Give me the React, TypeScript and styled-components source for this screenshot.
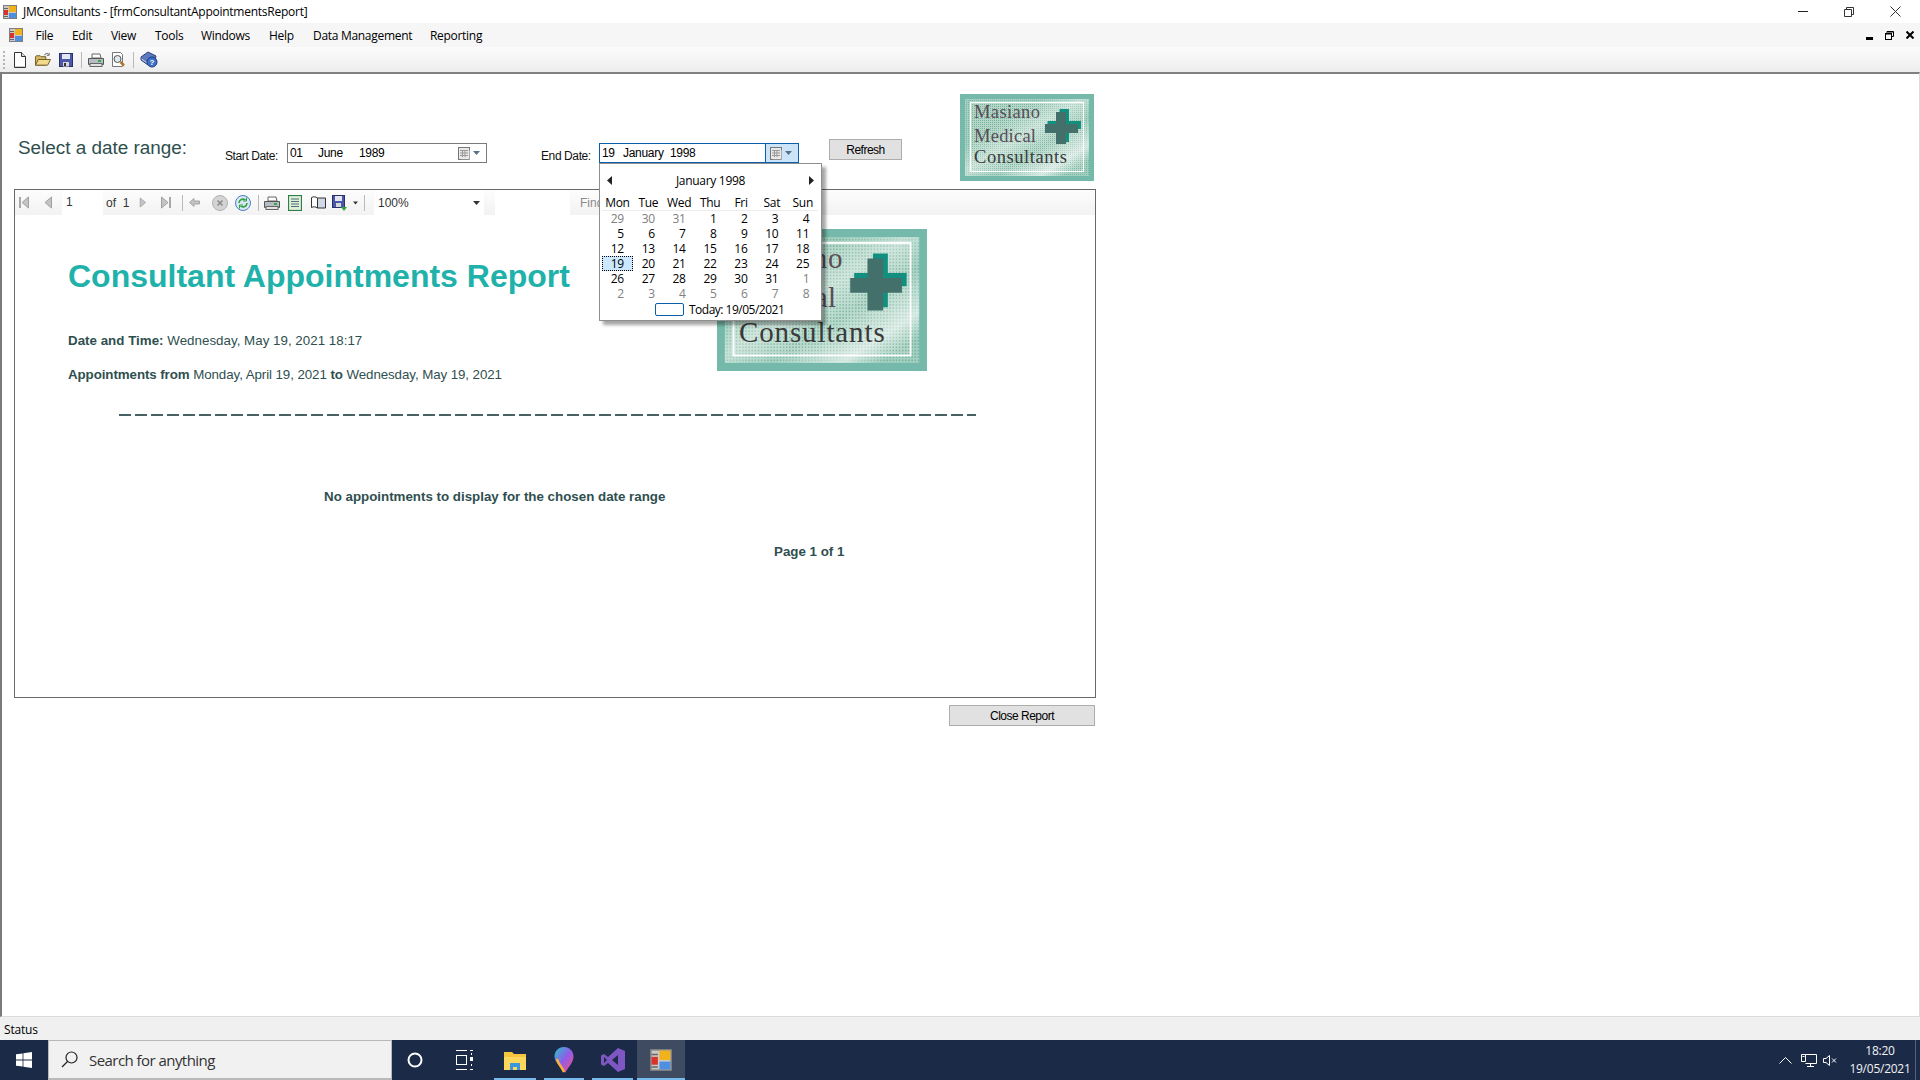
import React from "react";
import styled, { createGlobalStyle } from "styled-components";

const GlobalStyle = createGlobalStyle`
  html, body { margin: 0; padding: 0; width: 1920px; height: 1080px; overflow: hidden; background: #fff; }
  * { box-sizing: border-box; }
`;

const uiFont = `"Open Sans", "Noto Sans", sans-serif`;
const formFont = `"Liberation Sans", Arial, sans-serif`;

const Screen = styled.div`
  width: 1920px;
  height: 1080px;
  display: flex;
  flex-direction: column;
  font-family: ${uiFont};
  font-size: 12px;
  color: #000;
`;

/* window chrome */
const TitleBar = styled.div`
  height: 23px;
  display: flex;
  align-items: center;
  padding-left: 3px;
  background: #fff;
`;

const TitleText = styled.span`
  margin-left: 6px;
  font-size: 12px;
  letter-spacing: -0.25px;
  white-space: nowrap;
`;

const WindowButtons = styled.div`
  margin-left: auto;
  padding-right: 2px;
  display: flex;
  align-items: center;
`;

const WindowButton = styled.div`
  width: 46px;
  height: 20px;
  display: flex;
  align-items: center;
  justify-content: center;
`;

const MenuBar = styled.div`
  height: 24px;
  display: flex;
  align-items: center;
  padding-left: 9px;
  background: #f6f6f6;
`;

const MenuIconSlot = styled.div`
  width: 26.5px;
  display: flex;
`;

const MenuItem = styled.span<{ $w: number }>`
  width: ${(p) => p.$w}px;
  font-size: 12px;
  letter-spacing: -0.3px;
  white-space: nowrap;
`;

const ChildButtons = styled.div`
  margin-left: auto;
  display: flex;
  align-items: center;
  padding-right: 6px;
  gap: 12px;
`;

const ToolStrip = styled.div`
  height: 25px;
  display: flex;
  align-items: center;
  padding-left: 3px;
  background: linear-gradient(#fbfbfb, #f4f4f4 60%, #ececec);
`;

const Gripper = styled.div`
  width: 2px;
  height: 18px;
  background: repeating-linear-gradient(#b5b5b5 0 2px, transparent 2px 4px);
`;

const StripSlot = styled.div<{ $w: number }>`
  width: ${(p) => p.$w}px;
  display: flex;
  align-items: center;
  justify-content: center;
  flex: none;
`;

const StripSep = styled.div<{ $h?: number }>`
  width: 1px;
  height: ${(p) => p.$h ?? 16}px;
  background: #b9b9b9;
`;

const Client = styled.div`
  flex: 1;
  min-height: 0;
  border-top: 2px solid #808080;
  border-left: 2px solid #7a7a7a;
  border-right: 1px solid #dcdcdc;
  border-bottom: 1px solid #dcdcdc;
  background: #fff;
  display: flex;
  flex-direction: column;
  padding-top: 20px;
`;

/* date range row */
const FormRow = styled.div`
  display: flex;
  align-items: flex-start;
  height: 87px;
  padding-left: 16px;
  font-family: ${formFont};
`;

const Heading = styled.div`
  width: 207px;
  margin-top: 42px;
  font-size: 18.9px;
  line-height: 24px;
  color: #2f4f4f;
  white-space: nowrap;
`;

const FieldLabel = styled.div<{ $w: number; $gap?: number }>`
  width: ${(p) => p.$w}px;
  margin-left: ${(p) => p.$gap ?? 0}px;
  margin-top: 55px;
  font-size: 12px;
  line-height: 14px;
  letter-spacing: -0.4px;
  color: #111;
  white-space: nowrap;
`;

const DateField = styled.div<{ $open?: boolean }>`
  position: relative;
  width: 200px;
  height: 20px;
  margin-top: 49px;
  display: flex;
  align-items: center;
  padding-left: 2px;
  border: 1px solid ${(p) => (p.$open ? "#0a5fa8" : "#7a7a7a")};
  background: #fff;
  font-size: 12px;
  letter-spacing: -0.3px;
`;

const DateSeg = styled.span<{ $w?: number }>`
  width: ${(p) => (p.$w ? `${p.$w}px` : "auto")};
  white-space: nowrap;
`;

const DropButton = styled.div<{ $open?: boolean }>`
  margin-left: auto;
  width: 33px;
  height: 18px;
  padding-right: 2px;
  display: flex;
  align-items: center;
  justify-content: center;
  gap: 2px;
  background: ${(p) => (p.$open ? "#cce4f7" : "transparent")};
  border-left: 1px solid ${(p) => (p.$open ? "#0a5fa8" : "transparent")};
`;

const FormButton = styled.button<{ $w: number }>`
  width: ${(p) => p.$w}px;
  height: 21px;
  padding: 0;
  border: 1px solid #adadad;
  background: #e1e1e1;
  font-family: ${formFont};
  font-size: 12px;
  letter-spacing: -0.5px;
  color: #000;
`;

const RefreshButton = styled(FormButton)`
  margin-left: 30px;
  margin-top: 45px;
`;

const CloseButton = styled(FormButton)`
  margin-left: 947px;
  margin-top: 7px;
`;

const HeaderLogo = styled.div`
  width: 134px;
  height: 87px;
  margin-left: 58px;
  flex: none;
`;

/* calendar popup */
const Calendar = styled.div`
  position: absolute;
  z-index: 5;
  top: 19px;
  left: -1px;
  width: 223px;
  height: 158px;
  padding: 0 2px;
  border: 1px solid #8f8f8f;
  background: #fff;
  box-shadow: 4px 4px 3px rgba(0, 0, 0, 0.35);
  font-family: ${uiFont};
  font-size: 12px;
  letter-spacing: -0.3px;
`;

const CalHeader = styled.div`
  height: 31px;
  padding: 1px 5px 0 5px;
  display: flex;
  align-items: center;
  justify-content: space-between;
`;

const CalTitle = styled.span`
  font-size: 12px;
`;

const CalGrid = styled.div`
  display: grid;
  grid-template-columns: repeat(7, 30.9px);
`;

const DayName = styled.div`
  height: 16px;
  text-align: center;
  line-height: 16px;
  font-size: 12px;
  border-bottom: 1px solid #ececec;
`;

const DayCell = styled.div<{ $muted?: boolean; $selected?: boolean }>`
  height: 15px;
  line-height: 15px;
  text-align: right;
  padding-right: 9px;
  color: ${(p) => (p.$muted ? "#808080" : "#000")};
  background: ${(p) => (p.$selected ? "#cce8ff" : "transparent")};
  outline: ${(p) => (p.$selected ? "1px dotted #000" : "none")};
  outline-offset: -1px;
`;

const TodayRow = styled.div`
  margin-top: 2px;
  height: 13px;
  display: flex;
  align-items: center;
  padding-left: 53px;
  letter-spacing: -0.5px;
`;

const TodayBox = styled.div`
  width: 29px;
  height: 13px;
  margin-right: 5px;
  border: 1px solid #0a5fa8;
  border-radius: 2px;
`;

/* report viewer */
const Viewer = styled.div`
  width: 1082px;
  height: 509px;
  margin-left: 12px;
  margin-top: 8px;
  border: 1px solid #696969;
  flex: none;
  display: flex;
  flex-direction: column;
  background: #fff;
  font-family: ${formFont};
`;

const ViewerBar = styled.div`
  height: 25px;
  flex: none;
  display: flex;
  align-items: center;
  background: linear-gradient(#fdfdfd, #f2f2f2);
  font-size: 12px;
  color: #333;
`;

const PageBox = styled.div`
  width: 41px;
  height: 25px;
  margin-left: 1px;
  padding-left: 4px;
  line-height: 25px;
  background: #fff;
`;

const OfText = styled.span`
  width: 33px;
  margin-left: 3px;
  white-space: pre;
`;

const ZoomCombo = styled.div`
  width: 110px;
  height: 25px;
  margin-left: 4px;
  padding: 0 4px;
  display: flex;
  align-items: center;
  justify-content: space-between;
  background: #fff;
`;

const FindBox = styled.div`
  width: 75px;
  height: 25px;
  margin-left: 11px;
  background: #fff;
`;

const FindLabel = styled.span`
  margin-left: 10px;
  color: #8a8a8a;
`;

const ReportBody = styled.div`
  flex: 1;
  padding-top: 14px;
  color: #2f4f4f;
  font-size: 13.33px;
`;

const ReportTop = styled.div`
  display: grid;
  grid-template-columns: 702px 210px;
  height: 185px;
`;

const ReportText = styled.div`
  padding-left: 53px;
  padding-top: 29px;
`;

const ReportTitle = styled.h1`
  margin: 0 0 39px;
  font-size: 32px;
  line-height: 36px;
  font-weight: 700;
  color: #20b2aa;
  white-space: nowrap;
`;

const InfoLine = styled.p<{ $spacing: number }>`
  margin: 0 0 18px;
  line-height: 16px;
  white-space: nowrap;
  letter-spacing: ${(p) => p.$spacing}px;
`;

const ReportLogo = styled.div`
  width: 210px;
  height: 142px;
`;

const Rule = styled.div`
  width: 857px;
  height: 2px;
  margin-left: 104px;
  background: repeating-linear-gradient(90deg, #466262 0 12px, transparent 12px 16px);
`;

const EmptyNote = styled.div`
  margin-top: 73px;
  margin-left: 309px;
  line-height: 16px;
  font-weight: 700;
  white-space: nowrap;
`;

const PageNote = styled.div`
  margin-top: 39px;
  margin-left: 759px;
  line-height: 16px;
  font-weight: 700;
  white-space: nowrap;
`;

const StatusBar = styled.div`
  height: 23px;
  flex: none;
  display: flex;
  align-items: center;
  padding: 2px 0 0 4px;
  background: #f0f0f0;
  font-size: 12px;
  letter-spacing: -0.2px;
`;

/* taskbar */
const Taskbar = styled.div`
  height: 40px;
  flex: none;
  display: flex;
  align-items: stretch;
  background: #1b2a47;
`;

const StartSlot = styled.div`
  width: 48px;
  display: flex;
  align-items: center;
  justify-content: center;
`;

const SearchBox = styled.div`
  width: 344px;
  display: flex;
  align-items: center;
  gap: 11px;
  padding-left: 12px;
  background: #f1f1f1;
  border: 1px solid #b9b9b9;
  border-bottom-width: 2px;
  font-size: 15px;
  letter-spacing: -0.55px;
  color: #333;
`;

const TaskSlot = styled.div<{ $w: number; $active?: boolean; $running?: boolean }>`
  position: relative;
  width: ${(p) => p.$w}px;
  display: flex;
  align-items: center;
  justify-content: center;
  background: ${(p) => (p.$active ? "#3f4b61" : "transparent")};
  &::after {
    content: "";
    display: ${(p) => (p.$running ? "block" : "none")};
    position: absolute;
    left: ${(p) => (p.$active ? 0 : 4)}px;
    right: ${(p) => (p.$active ? 0 : 4)}px;
    bottom: 0;
    height: 2px;
    background: #76b9ed;
  }
`;

const Tray = styled.div`
  margin-left: auto;
  display: flex;
  align-items: center;
  color: #fff;
`;

const TrayIcon = styled.div<{ $w: number }>`
  width: ${(p) => p.$w}px;
  display: flex;
  justify-content: center;
`;

const Clock = styled.div`
  width: 70px;
  margin-left: 5px;
  text-align: center;
  font-size: 12px;
  line-height: 18px;
  letter-spacing: -0.25px;
  color: #f2f2f2;
`;

const ShowDesktop = styled.div`
  width: 5px;
  align-self: stretch;
  border-left: 1px solid #56627a;
`;

/* icons */
const AppIcon = ({ size = 14 }: { size?: number }) => (
  <svg width={size} height={size} viewBox="0 0 14 14">
    <rect x="0.5" y="0.5" width="13" height="13" fill="#c9c9c9" stroke="#7d7d7d" />
    <rect x="6" y="1" width="7" height="6" fill="#f2b21c" />
    <rect x="6" y="8" width="7" height="5" fill="#4f8fe0" />
    <rect x="1" y="5" width="4" height="5" fill="#d8322a" />
    <path d="M1 3.5h4M1 11.5h4" stroke="#666" />
  </svg>
);

const NewDoc = () => (
  <svg width="14" height="16" viewBox="0 0 14 16">
    <path d="M1.5.5h7l4 4v11h-11z" fill="#fff" stroke="#333" />
    <path d="M8.5.5v4h4" fill="#ddd" stroke="#333" />
    <path d="M2.5 14.5h9" stroke="#ccc" />
  </svg>
);

const OpenFolder = () => (
  <svg width="17" height="15" viewBox="0 0 17 15">
    <path d="M.5 13.5v-9l1-1h4l1 1h5v9z" fill="#d9b660" stroke="#6b5a2b" />
    <path d="M.5 13.5l3-6h13l-3 6z" fill="#f3d98c" stroke="#6b5a2b" />
    <path d="M10 3c1-2 3-2.500 4-1.500M15 .5v2.500h-2.500" fill="none" stroke="#555" />
  </svg>
);

const SaveDisk = ({ size = 14 }: { size?: number }) => (
  <svg width={size} height={size} viewBox="0 0 14 14">
    <rect x=".5" y=".5" width="13" height="13" fill="#4b58a8" stroke="#28306e" />
    <rect x="3" y="1" width="8" height="5" fill="#e4e7f2" />
    <rect x="4" y="9" width="6" height="4.500" fill="#d7d7d7" />
    <rect x="5" y="10" width="2" height="3" fill="#333" />
  </svg>
);

const Printer = () => (
  <svg width="16" height="14" viewBox="0 0 16 14">
    <path d="M4 5V1h8l1 4z" fill="#fff" stroke="#666" />
    <path d="M.5 5.500h15v6h-15z" fill="#b6bcc4" stroke="#555" />
    <rect x="2" y="10.500" width="12" height="3" fill="#e2e2e2" stroke="#666" />
    <rect x="10" y="7" width="3" height="2" fill="#2fb04a" />
  </svg>
);

const Preview = () => (
  <svg width="15" height="16" viewBox="0 0 15 16">
    <path d="M1.500.5h8l2 2v12h-10z" fill="#fff" stroke="#777" />
    <circle cx="6.500" cy="7" r="3.500" fill="#dfe8ee" stroke="#555" />
    <path d="M9.500 10l3.500 3.500" stroke="#b4722a" strokeWidth="2.500" />
  </svg>
);

const HelpBook = () => (
  <svg width="18" height="17" viewBox="0 0 18 17">
    <path d="M1 6l7-5 8 4-1 4-7 5-7-5z" fill="#5e79bf" stroke="#2e3f78" />
    <path d="M1.500 8l6.500 4.500" stroke="#cfd6ea" />
    <circle cx="12" cy="11" r="5" fill="#3d6fc9" stroke="#1f3d80" />
    <text x="12" y="14" textAnchor="middle" fontSize="8" fontWeight="700" fill="#fff" fontFamily="Liberation Sans, sans-serif">?</text>
  </svg>
);

const NavArrow = ({ dir, stop }: { dir: "l" | "r"; stop?: boolean }) => (
  <svg width="11" height="13" viewBox="0 0 11 13" style={{ transform: dir === "r" ? "scaleX(-1)" : undefined }}>
    {stop && <rect x="0" y="1" width="2" height="11" fill="#a8a8a8" />}
    <path d="M9.500 1v11L3 6.500z" fill="#c4c4c4" stroke="#a0a0a0" />
  </svg>
);

const BackArrow = () => (
  <svg width="11" height="9" viewBox="0 0 11 9">
    <path d="M5 .5v2.500h5.500v3H5v2.500L.5 4.500z" fill="#c3c3c3" stroke="#a6a6a6" />
  </svg>
);

const StopIcon = () => (
  <svg width="16" height="16" viewBox="0 0 16 16">
    <circle cx="8" cy="8" r="7.500" fill="#d4d4d4" stroke="#b0b0b0" />
    <path d="M5.500 5.500l5 5m0-5l-5 5" stroke="#8c8c8c" strokeWidth="1.600" />
  </svg>
);

const RefreshIcon = () => (
  <svg width="16" height="16" viewBox="0 0 16 16">
    <circle cx="8" cy="8" r="7.500" fill="#d9e7f7" stroke="#4a7fc1" />
    <path d="M4 8a4 4 0 0 1 6.500-3M12 8a4 4 0 0 1-6.500 3" fill="none" stroke="#2fa33c" strokeWidth="1.600" />
    <path d="M11.500 2.500v3.500H8M4.500 13.500V10H8" fill="none" stroke="#2fa33c" />
  </svg>
);

const PageIcon = () => (
  <svg width="14" height="16" viewBox="0 0 14 16">
    <rect x=".5" y=".5" width="13" height="15" fill="#dff0d8" stroke="#2f7d4a" strokeWidth="1.200" />
    <path d="M3 4h8M3 6.500h8M3 9h8M3 11.500h8" stroke="#4d6c7c" />
  </svg>
);

const BookIcon = () => (
  <svg width="15" height="13" viewBox="0 0 15 13">
    <path d="M.5 1.500c2-1 4-1 6 .5v10c-2-1.500-4-1.500-6-.5z" fill="#fff" stroke="#333" />
    <path d="M6.500 2h8v10h-8z" fill="#cfd8e6" stroke="#333" />
  </svg>
);

const SaveGreen = () => (
  <svg width="16" height="16" viewBox="0 0 16 16">
    <rect x=".5" y=".5" width="12" height="12" fill="#4b58a8" stroke="#28306e" />
    <rect x="3" y="1" width="7" height="5" fill="#e4e7f2" />
    <rect x="4" y="8" width="5" height="4" fill="#d7d7d7" />
    <path d="M12 9v3h3l-3 4-3-4h3z" fill="#2fa33c" />
  </svg>
);

const SmallCaret = ({ color = "#333" }: { color?: string }) => (
  <svg width="7" height="4" viewBox="0 0 7 4">
    <path d="M0 0h7L3.500 4z" fill={color} />
  </svg>
);

const CalIcon = () => (
  <svg width="13" height="13" viewBox="0 0 13 13">
    <rect x=".5" y=".5" width="11" height="12" fill="#e8e8e8" stroke="#777" />
    <path d="M11.500 3v10H3" fill="none" stroke="#aaa" />
    <path d="M2 3.500h8M2 6h8M2 8.500h8M4.500 3v7M7 3v7" stroke="#999" />
  </svg>
);

const CalArrow = ({ right }: { right?: boolean }) => (
  <svg width="5" height="9" viewBox="0 0 5 9" style={{ transform: right ? "scaleX(-1)" : undefined }}>
    <path d="M5 0v9L0 4.500z" fill="#222" />
  </svg>
);

const MinimizeIcon = () => (
  <svg width="10" height="1"><rect width="10" height="1" fill="#222" /></svg>
);

const RestoreIcon = () => (
  <svg width="10" height="10" viewBox="0 0 10 10">
    <path d="M.5 2.500h7v7h-7zM2.500 2.500v-2h7v7h-2" fill="none" stroke="#333" />
  </svg>
);

const CloseIcon = () => (
  <svg width="11" height="11" viewBox="0 0 11 11">
    <path d="M.5.5l10 10m0-10l-10 10" stroke="#333" />
  </svg>
);

const ChildMin = () => (
  <svg width="7" height="9" viewBox="0 0 7 9"><rect width="7" height="3" y="6" fill="#000" /></svg>
);

const ChildRestore = () => (
  <svg width="9" height="9" viewBox="0 0 9 9">
    <path d="M2 2V.5h6.500v5H7" fill="none" stroke="#000" />
    <rect x=".5" y="2.500" width="6" height="6" fill="none" stroke="#000" />
    <path d="M1 3h5M3 1h5" stroke="#000" />
  </svg>
);

const ChildClose = () => (
  <svg width="8" height="8" viewBox="0 0 8 8">
    <path d="M.5.5l7 7m0-7l-7 7" stroke="#000" strokeWidth="2" />
  </svg>
);

const WinLogo = () => (
  <svg width="16" height="16" viewBox="0 0 16 16">
    <path d="M0 2.300l6.600-.9v6.200H0zM7.400 1.300L16 0v7.600H7.400zM0 8.400h6.600v6.200L0 13.700zM7.400 8.400H16V16l-8.600-1.200z" fill="#fff" />
  </svg>
);

const SearchGlass = () => (
  <svg width="17" height="17" viewBox="0 0 17 17">
    <circle cx="10.500" cy="6.500" r="5.500" fill="none" stroke="#222" strokeWidth="1.200" />
    <path d="M6.500 10.500L1 16" stroke="#222" strokeWidth="1.200" />
  </svg>
);

const TaskView = () => (
  <svg width="17" height="20" viewBox="0 0 17 20">
    <path d="M0 .5h11M0 19.500h11" stroke="#fff" />
    <rect x=".5" y="5.500" width="10" height="9" fill="none" stroke="#fff" />
    <rect x="14" y="7" width="3" height="4" fill="#fff" />
    <path d="M14 .5h3M14 19.500h3M15.500 3v2M15.500 14v2" stroke="#fff" />
  </svg>
);

const Explorer = () => (
  <svg width="22" height="19" viewBox="0 0 22 19">
    <path d="M0 1h8l2 2h12v16H0z" fill="#f5c542" />
    <path d="M0 6h22v13H0z" fill="#fbd75b" />
    <path d="M6 12h10v7h-3v-3h-4v3H6z" fill="#3a96dd" />
  </svg>
);

const MapsPin = () => (
  <svg width="20" height="26" viewBox="0 0 20 26">
    <defs>
      <linearGradient id="pin-fill" x1="0" y1="0" x2="1" y2="1">
        <stop offset="0" stopColor="#27c4c9" />
        <stop offset="0.5" stopColor="#8f5ce8" />
        <stop offset="1" stopColor="#ff4f7d" />
      </linearGradient>
    </defs>
    <path d="M10 0c6 0 9.500 4.500 9.500 9.500 0 6-5.500 11-8 16h-1C8 20.500.5 16 .5 9.500.5 4.500 4 0 10 0z" fill="url(#pin-fill)" />
    <path d="M3 12c1 5 5 8 7 13" stroke="#f9b233" strokeWidth="2.500" fill="none" />
  </svg>
);

const VsLogo = () => (
  <svg width="24" height="24" viewBox="0 0 24 24">
    <path d="M17 0l7 3v18l-7 3-10-9-4 3-3-1.500v-9L3 6l4 3zM17 7l-6 5 6 5zM3 9v6l3-3z" fill="#7e57c2" />
  </svg>
);

const Chevron = () => (
  <svg width="13" height="8" viewBox="0 0 13 8">
    <path d="M.5 7.500l6-6 6 6" fill="none" stroke="#fff" />
  </svg>
);

const NetworkIcon = () => (
  <svg width="16" height="13" viewBox="0 0 16 13">
    <path d="M4.500.5h11v9h-11M.5.5h4v7h-4zM9.500 9.500v3M6 12.500h7" fill="none" stroke="#fff" />
    <rect x="1.500" y="2" width="2" height="1" fill="#fff" />
  </svg>
);

const MutedSpeaker = () => (
  <svg width="14" height="11" viewBox="0 0 14 11">
    <path d="M.5 3.500h2.500L6.500.5v10l-3.500-3H.5z" fill="none" stroke="#fff" />
    <path d="M9 3.500l4 4m0-4l-4 4" stroke="#fff" />
  </svg>
);

const LogoArt = ({ id }: { id: string }) => (
  <svg width="100%" height="100%" viewBox="0 0 134 87" preserveAspectRatio="none" style={{ display: "block" }}>
    <defs>
      <pattern id={`${id}-dots`} width="2" height="2" patternUnits="userSpaceOnUse">
        <rect width="2" height="2" fill="#b4d7c9" />
        <rect width="1" height="1" fill="#78b39e" />
      </pattern>
      <linearGradient id={`${id}-gloss`} x1="0" y1="0" x2="1" y2="1">
        <stop offset="0.3" stopColor="#fff" stopOpacity="0" />
        <stop offset="0.47" stopColor="#fff" stopOpacity="0.4" />
        <stop offset="0.62" stopColor="#fff" stopOpacity="0.05" />
        <stop offset="0.8" stopColor="#fff" stopOpacity="0.6" />
        <stop offset="0.9" stopColor="#fff" stopOpacity="0" />
      </linearGradient>
    </defs>
    <rect width="134" height="87" fill="#74b9a9" />
    <rect x="5" y="5" width="124" height="77" fill={`url(#${id}-dots)`} opacity="0.75" />
    <rect x="10.500" y="8.500" width="113" height="69" fill={`url(#${id}-dots)`} stroke="#fff" strokeWidth="1.200" />
    <rect x="5" y="5" width="124" height="77" fill={`url(#${id}-gloss)`} />
    <path d="M99.500 15h9.500v12h12v8h-12v13h-9.500V35h-12v-8h12z" fill="#12907f" />
    <path d="M96 18h10v12h12v9h-12v11H96V39H85v-9h11z" fill="#44706c" />
    <g fontFamily="Liberation Serif, serif" fontSize="18.500">
      <text x="14" y="24" textLength="66" fill="#5b4c55">Masiano</text>
      <text x="14" y="48" textLength="62" fill="#5b4c55">Medical</text>
      <text x="14" y="69" textLength="93" fill="#3a3a3a">Consultants</text>
    </g>
  </svg>
);

const menus = [
  { label: "File", w: 36.5 },
  { label: "Edit", w: 39 },
  { label: "View", w: 44 },
  { label: "Tools", w: 46 },
  { label: "Windows", w: 68 },
  { label: "Help", w: 44 },
  { label: "Data Management", w: 117 },
  { label: "Reporting", w: 60 },
];

type Day = { d: number; muted?: boolean; selected?: boolean };

const dayNames = ["Mon", "Tue", "Wed", "Thu", "Fri", "Sat", "Sun"];

const days: Day[] = [
  ...[29, 30, 31].map((d) => ({ d, muted: true })),
  ...Array.from({ length: 31 }, (_, i) => ({ d: i + 1, selected: i + 1 === 19 })),
  ...[1, 2, 3, 4, 5, 6, 7, 8].map((d) => ({ d, muted: true })),
];

const CalendarPopup = () => (
  <Calendar>
    <CalHeader>
      <CalArrow />
      <CalTitle>January 1998</CalTitle>
      <CalArrow right />
    </CalHeader>
    <CalGrid>
      {dayNames.map((n) => (
        <DayName key={n}>{n}</DayName>
      ))}
      {days.map((day, i) => (
        <DayCell key={i} $muted={day.muted} $selected={day.selected}>
          {day.d}
        </DayCell>
      ))}
    </CalGrid>
    <TodayRow>
      <TodayBox />
      Today: 19/05/2021
    </TodayRow>
  </Calendar>
);

export default function App() {
  return (
    <Screen>
      <GlobalStyle />
      <TitleBar>
        <AppIcon />
        <TitleText>JMConsultants - [frmConsultantAppointmentsReport]</TitleText>
        <WindowButtons>
          <WindowButton><MinimizeIcon /></WindowButton>
          <WindowButton><RestoreIcon /></WindowButton>
          <WindowButton><CloseIcon /></WindowButton>
        </WindowButtons>
      </TitleBar>

      <MenuBar>
        <MenuIconSlot><AppIcon /></MenuIconSlot>
        {menus.map((m) => (
          <MenuItem key={m.label} $w={m.w}>{m.label}</MenuItem>
        ))}
        <ChildButtons>
          <ChildMin />
          <ChildRestore />
          <ChildClose />
        </ChildButtons>
      </MenuBar>

      <ToolStrip>
        <Gripper />
        <StripSlot $w={30}><NewDoc /></StripSlot>
        <StripSlot $w={16}><OpenFolder /></StripSlot>
        <StripSlot $w={30}><SaveDisk /></StripSlot>
        <StripSep />
        <StripSlot $w={27}><Printer /></StripSlot>
        <StripSlot $w={19}><Preview /></StripSlot>
        <StripSlot $w={5} />
        <StripSep />
        <StripSlot $w={29}><HelpBook /></StripSlot>
      </ToolStrip>

      <Client>
        <FormRow>
          <Heading>Select a date range:</Heading>
          <FieldLabel $w={62}>Start Date:</FieldLabel>
          <DateField>
            <DateSeg $w={28}>01</DateSeg>
            <DateSeg $w={41}>June</DateSeg>
            <DateSeg>1989</DateSeg>
            <DropButton>
              <CalIcon />
              <SmallCaret color="#5a6e8c" />
            </DropButton>
          </DateField>
          <FieldLabel $w={58} $gap={54}>End Date:</FieldLabel>
          <DateField $open>
            <DateSeg $w={21}>19</DateSeg>
            <DateSeg $w={47}>January</DateSeg>
            <DateSeg>1998</DateSeg>
            <DropButton $open>
              <CalIcon />
              <SmallCaret color="#5a6e8c" />
            </DropButton>
            <CalendarPopup />
          </DateField>
          <RefreshButton $w={73}>Refresh</RefreshButton>
          <HeaderLogo><LogoArt id="head-logo" /></HeaderLogo>
        </FormRow>

        <Viewer>
          <ViewerBar>
            <StripSlot $w={18}><NavArrow dir="l" stop /></StripSlot>
            <StripSlot $w={28}><NavArrow dir="l" /></StripSlot>
            <PageBox>1</PageBox>
            <OfText>of  1</OfText>
            <StripSlot $w={9}><NavArrow dir="r" /></StripSlot>
            <StripSlot $w={34}><NavArrow dir="r" stop /></StripSlot>
            <StripSep />
            <StripSlot $w={23}><BackArrow /></StripSlot>
            <StripSlot $w={28}><StopIcon /></StripSlot>
            <StripSlot $w={18}><RefreshIcon /></StripSlot>
            <StripSlot $w={12}><StripSep /></StripSlot>
            <StripSlot $w={16}><Printer /></StripSlot>
            <StripSlot $w={30}><PageIcon /></StripSlot>
            <StripSlot $w={17}><BookIcon /></StripSlot>
            <StripSlot $w={26}><SaveGreen /></StripSlot>
            <StripSlot $w={5}><SmallCaret /></StripSlot>
            <StripSlot $w={12}><StripSep /></StripSlot>
            <ZoomCombo>
              100%
              <SmallCaret />
            </ZoomCombo>
            <FindBox />
            <FindLabel>Find</FindLabel>
          </ViewerBar>
          <ReportBody>
            <ReportTop>
              <ReportText>
                <ReportTitle>Consultant Appointments Report</ReportTitle>
                <InfoLine $spacing={0.02}><b>Date and Time:</b> Wednesday, May 19, 2021 18:17</InfoLine>
                <InfoLine $spacing={-0.08}><b>Appointments from</b> Monday, April 19, 2021 <b>to</b> Wednesday, May 19, 2021</InfoLine>
              </ReportText>
              <ReportLogo><LogoArt id="report-logo" /></ReportLogo>
            </ReportTop>
            <Rule />
            <EmptyNote>No appointments to display for the chosen date range</EmptyNote>
            <PageNote>Page 1 of 1</PageNote>
          </ReportBody>
        </Viewer>

        <CloseButton $w={146}>Close Report</CloseButton>
      </Client>

      <StatusBar>Status</StatusBar>

      <Taskbar>
        <StartSlot><WinLogo /></StartSlot>
        <SearchBox>
          <SearchGlass />
          Search for anything
        </SearchBox>
        <TaskSlot $w={46}>
          <svg width="16" height="16" viewBox="0 0 16 16"><circle cx="8" cy="8" r="6.500" fill="none" stroke="#fff" strokeWidth="2" /></svg>
        </TaskSlot>
        <TaskSlot $w={52}><TaskView /></TaskSlot>
        <TaskSlot $w={50} $running><Explorer /></TaskSlot>
        <TaskSlot $w={48} $running><MapsPin /></TaskSlot>
        <TaskSlot $w={49} $running><VsLogo /></TaskSlot>
        <TaskSlot $w={48} $active $running><AppIcon size={22} /></TaskSlot>
        <Tray>
          <TrayIcon $w={26}><Chevron /></TrayIcon>
          <TrayIcon $w={22}><NetworkIcon /></TrayIcon>
          <TrayIcon $w={20}><MutedSpeaker /></TrayIcon>
          <Clock>
            18:20
            <br />
            19/05/2021
          </Clock>
          <ShowDesktop />
        </Tray>
      </Taskbar>
    </Screen>
  );
}
